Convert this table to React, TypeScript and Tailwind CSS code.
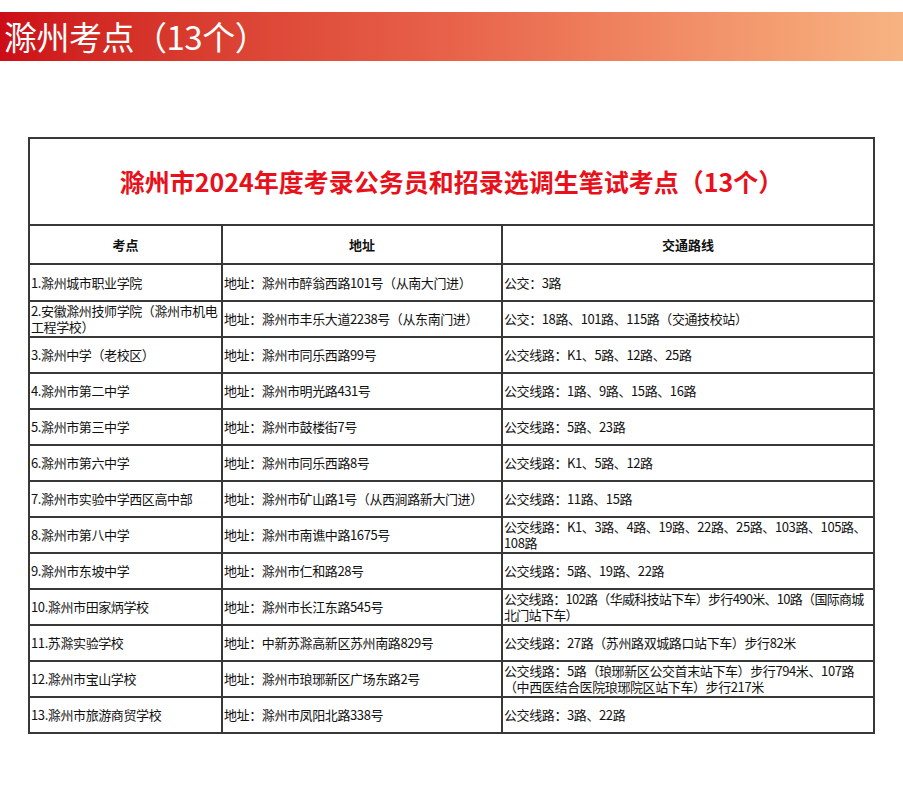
const rows: [string, string, string][] = [
  ["1.滁州城市职业学院", "地址：滁州市醉翁西路101号（从南大门进）", "公交：3路"],
  ["2.安徽滁州技师学院（滁州市机电工程学校）", "地址：滁州市丰乐大道2238号（从东南门进）", "公交：18路、101路、115路（交通技校站）"],
  ["3.滁州中学（老校区）", "地址：滁州市同乐西路99号", "公交线路：K1、5路、12路、25路"],
  ["4.滁州市第二中学", "地址：滁州市明光路431号", "公交线路：1路、9路、15路、16路"],
  ["5.滁州市第三中学", "地址：滁州市鼓楼街7号", "公交线路：5路、23路"],
  ["6.滁州市第六中学", "地址：滁州市同乐西路8号", "公交线路：K1、5路、12路"],
  ["7.滁州市实验中学西区高中部", "地址：滁州市矿山路1号（从西涧路新大门进）", "公交线路：11路、15路"],
  ["8.滁州市第八中学", "地址：滁州市南谯中路1675号", "公交线路：K1、3路、4路、19路、22路、25路、103路、105路、108路"],
  ["9.滁州市东坡中学", "地址：滁州市仁和路28号", "公交线路：5路、19路、22路"],
  ["10.滁州市田家炳学校", "地址：滁州市长江东路545号", "公交线路：102路（华威科技站下车）步行490米、10路（国际商城北门站下车）"],
  ["11.苏滁实验学校", "地址：中新苏滁高新区苏州南路829号", "公交线路：27路（苏州路双城路口站下车）步行82米"],
  ["12.滁州市宝山学校", "地址：滁州市琅琊新区广场东路2号", "公交线路：5路（琅琊新区公交首末站下车）步行794米、107路（中西医结合医院琅琊院区站下车）步行217米"],
  ["13.滁州市旅游商贸学校", "地址：滁州市凤阳北路338号", "公交线路：3路、22路"],
];

const font = "font-['Microsoft_YaHei','Noto_Sans_CJK_SC',sans-serif]";
const cell = "border-2 border-[#383838] pl-[1px] pr-[1px] leading-[16px] align-middle";

export default function App() {
  return (
    <div className={`w-[903px] h-[800px] bg-white pt-[12px] ${font}`}>
      <div className="h-[49px] flex items-center pl-[4px] bg-gradient-to-r from-[#cc0b17] via-[#e8624a] to-[#f7b381]">
        <span className="text-white text-[33px] leading-none tracking-[-0.5px]">滁州考点（13个）</span>
      </div>

      <div className="pl-[28px] pt-[76px]">
        <table className="w-[845px] table-fixed border-collapse text-[13px] text-[#111]">
          <colgroup>
            <col className="w-[193px]" />
            <col className="w-[280px]" />
            <col className="w-[372px]" />
          </colgroup>
          <tbody>
            <tr className="h-[87px]">
              <td colSpan={3} className="border-2 border-[#383838] text-center text-[25px] font-bold text-[#e8101a]">
                滁州市2024年度考录公务员和招录选调生笔试考点（13个）
              </td>
            </tr>
            <tr className="h-[39px]">
              <th className="border-2 border-[#383838] font-bold text-center">考点</th>
              <th className="border-2 border-[#383838] font-bold text-center">地址</th>
              <th className="border-2 border-[#383838] font-bold text-center">交通路线</th>
            </tr>
            {rows.map(([name, addr, route], i) => (
              <tr key={i} className={i === 0 ? "h-[37px]" : "h-[36px]"}>
                <td className={`${cell} tracking-[-0.4px]`}>{name}</td>
                <td className={`${cell} tracking-[-0.4px]`}>{addr}</td>
                <td className={`${cell} ${i === 9 ? "tracking-[-0.7px]" : "tracking-[-0.4px]"}`}>{route}</td>
              </tr>
            ))}
          </tbody>
        </table>
      </div>
    </div>
  );
}
